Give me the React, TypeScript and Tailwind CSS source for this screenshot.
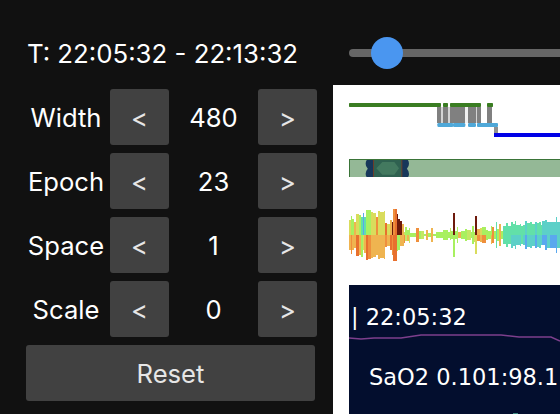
import React from 'react';

const stepperRows = [
  { label: 'Width', value: '480' },
  { label: 'Epoch', value: '23' },
  { label: 'Space', value: '1' },
  { label: 'Scale', value: '0' },
];

const O = '#ef8f3c';
const A = '#efb450';
const Y = '#d9dc5c';
const L = '#a8f060';
const G = '#c4e864';
const T = '#62e0a8';
const C = '#5cd0c8';
const B = '#5aa8ee';
const D = '#6e1a0c';
const R = '#e8702e';

// x (zoomed px), height above, height below, colour above, colour below
const wave: [number, number, number, string, string][] = [
  [48, 15, 15, Y, A], [54, 19, 19, L, O], [57, 16, 15, L, A], [63, 13, 13, A, A], [69, 21, 21, Y, R],
  [78, 20, 20, L, A], [84, 18, 22, T, L], [90, 22, 15, B, Y], [93, 18, 18, T, A], [99, 25, 25, L, R],
  [105, 25, 24, L, O], [114, 23, 23, Y, A], [120, 22, 22, Y, A], [129, 18, 20, O, A], [135, 24, 24, Y, A],
  [141, 23, 23, Y, A], [153, 24, 24, Y, A], [156, 12, 12, R, O], [162, 11, 11, Y, A], [170, 15, 15, A, R],
  [177, 13, 20, D, O], [180, 26, 26, O, R], [186, 26, 26, R, R], [192, 21, 16, D, L], [195, 16, 15, D, L],
  [201, 14, 11, D, A], [207, 11, 11, A, A], [213, 3, 8, G, O], [216, 8, 6, L, G], [222, 5, 6, L, A],
  [228, 7, 8, L, G], [231, 2, 2, L, L], [250, 7, 7, O, O], [258, 4, 4, L, L], [265, 4, 4, G, G],
  [273, 1, 1, L, L], [279, 5, 5, A, A], [285, 2, 2, L, L], [294, 7, 7, A, A], [300, 1, 1, L, L],
  [310, 3, 3, L, L], [330, 5, 5, L, L], [345, 3, 3, L, L], [351, 7, 5, G, L], [354, 4, 4, L, L],
  [360, 22, 22, D, L], [366, 4, 4, L, L], [372, 8, 8, L, L], [375, 3, 3, A, A], [385, 4, 4, L, L],
  [395, 6, 6, L, L], [402, 5, 5, G, G], [414, 3, 3, L, L], [417, 9, 9, L, L], [423, 3, 7, L, Y],
  [426, 19, 19, D, Y], [432, 6, 6, A, O], [440, 7, 7, Y, A], [447, 8, 8, L, O], [459, 5, 5, L, L],
  [465, 4, 4, L, L], [474, 9, 9, L, A], [477, 8, 8, O, O], [483, 4, 4, L, L], [489, 13, 13, T, T],
  [492, 6, 6, L, L], [498, 11, 11, A, A], [504, 4, 4, L, L], [510, 9, 9, T, T], [519, 12, 12, T, T],
  [525, 9, 9, T, T], [534, 13, 13, T, C], [540, 11, 11, T, C], [546, 14, 14, T, C], [549, 10, 10, T, C],
  [561, 11, 11, T, C], [564, 9, 9, T, T], [570, 10, 10, T, C], [576, 14, 14, C, B], [582, 12, 12, T, C],
  [591, 13, 13, T, C], [597, 11, 11, T, C], [606, 13, 13, C, B], [612, 12, 12, T, C], [618, 13, 13, T, C],
  [624, 10, 10, T, C], [627, 14, 10, C, B], [636, 15, 15, C, B], [642, 13, 13, C, C], [651, 13, 13, C, B],
  [669, 18, 18, C, B], [672, 13, 13, C, C],
];

function Hypnogram() {
  return (
    <svg viewBox="0 0 681 330" className="block h-[110px] w-[227px] shrink-0">
      <defs>
        <clipPath id="band">
          <rect x={48} y={225} width={633} height={51} />
        </clipPath>
      </defs>
      <rect x={312} y={66} width={165} height={48} fill="#d4d4d4" />
      <rect x={432} y={66} width={30} height={48} fill="#ffffff" />
      <rect x={396} y={66} width={9} height={48} fill="#f0f0f0" />
      {[[312, 12], [330, 15], [351, 45], [405, 24], [432, 12], [462, 15]].map(([x, w]) => (
        <rect key={x} x={x} y={66} width={w} height={48} fill="#808080" />
      ))}
      <rect x={483} y={126} width={12} height={18} fill="#909090" />
      {[[48, 276], [330, 15], [351, 93], [462, 18]].map(([x, w]) => (
        <rect key={x} x={x} y={54} width={w} height={12} rx={2} fill="#3a7d22" />
      ))}
      <rect x={313} y={114} width={48} height={12} rx={4} fill="#4fa8d8" />
      <rect x={360} y={114} width={37} height={12} rx={4} fill="#4fa8d8" />
      <rect x={405} y={114} width={24} height={12} rx={4} fill="#4fa8d8" />
      <rect x={432} y={114} width={63} height={12} rx={3} fill="#4fa8d8" />
      <rect x={483} y={144} width={198} height={12} fill="#0000e6" />

      <rect x={48} y={222} width={633} height={54} fill="#94b896" />
      <rect x={48} y={222} width={633} height={3} fill="#3a7438" />
      <rect x={48} y={222} width={3} height={54} fill="#3a7438" />
      <g clipPath="url(#band)">
        {[[118, 236], [208, 236], [118, 266], [208, 266]].map(([cx, cy]) => (
          <circle key={`${cx}-${cy}`} cx={cx} cy={cy} r={20} fill="#17375a" />
        ))}
      </g>
      <rect x={120} y={225} width={87} height={51} fill="#2f6150" />
      <polygon points="130,250 148,231 184,231 198,250 184,269 148,269" fill="#43795f" />
      <rect x={120} y={225} width={3} height={51} fill="#6b3c2a" />
      <rect x={205} y={225} width={3} height={51} fill="#6b3c2a" />
    </svg>
  );
}

function Waveform() {
  return (
    <svg viewBox="0 0 681 270" className="block h-[90px] w-[227px] shrink-0" shapeRendering="crispEdges">
      {wave.map(([x, up, down, top, bottom], i) => {
        const next = i + 1 < wave.length ? wave[i + 1][0] : 681;
        return (
          <g key={x}>
            <rect x={x} y={120 - up * 3} width={next - x} height={up * 3} fill={top} />
            <rect x={x} y={120} width={next - x} height={down * 3} fill={bottom} />
          </g>
        );
      })}
    </svg>
  );
}

function SignalPanel() {
  return (
    <div className="relative ml-4 flex-1 overflow-hidden bg-[#030e2e] pl-[2px] pt-[16px] font-['DejaVu_Sans',sans-serif] text-[22.5px] leading-[32px] text-white">
      <div className="whitespace-nowrap">| 22:05:32</div>
      <svg viewBox="0 0 211 20" className="absolute left-0 top-[42px] h-5 w-[211px]">
        <polyline
          points="0,11 12,12 25,11 52,11 72,8 100,8 120,8 152,8 170,10 202,10 211,14"
          fill="none"
          stroke="#7d3f8c"
          strokeWidth="1.5"
        />
      </svg>
      <div className="mt-7 whitespace-nowrap pl-[18px]">SaO2 0.101:98.1</div>
      <div className="absolute bottom-0 left-[164px] h-px w-[5px] bg-[#3d8a80]" />
    </div>
  );
}

export default function App() {
  return (
    <div className="flex h-[414px] w-[560px] overflow-hidden bg-[#111111] font-['Inter',sans-serif] text-white">
      <div className="flex w-[333px] shrink-0 flex-col">
        <div className="flex h-[89px] items-center pl-[27px] pt-[20px] text-[25.8px] whitespace-nowrap">
          T: 22:05:32 - 22:13:32
        </div>
        <div className="flex flex-col gap-2 pl-[22px]">
          {stepperRows.map((row) => (
            <div key={row.label} className="flex h-14 items-center">
              <div className="w-[88px] pt-[2px] text-center text-[25.6px]">{row.label}</div>
              <button className="flex h-14 w-[59px] items-center justify-center rounded-[3px] bg-[#414141] pt-[2px] text-[25.6px] text-[#e6e6e6]">
                &lt;
              </button>
              <div className="w-[89px] pt-[2px] text-center text-[25.6px]">{row.value}</div>
              <button className="flex h-14 w-[59px] items-center justify-center rounded-[3px] bg-[#414141] pt-[2px] text-[25.6px] text-[#e6e6e6]">
                &gt;
              </button>
            </div>
          ))}
          <button className="ml-1 h-14 w-[289px] rounded-[3px] bg-[#414141] pt-[2px] text-[25.6px] text-[#e6e6e6]">Reset</button>
        </div>
      </div>
      <div className="flex min-w-0 flex-1 flex-col">
        <div className="relative flex h-[85px] shrink-0 items-center pl-4 pt-[21px]">
          <div className="h-2 w-[300px] shrink-0 rounded-l-full bg-[#666666]" />
          <div className="absolute left-[38px] top-[37px] h-8 w-8 rounded-full bg-[#4a96f0]" />
        </div>
        <div className="flex min-h-0 flex-1 flex-col bg-white">
          <Hypnogram />
          <Waveform />
          <SignalPanel />
        </div>
      </div>
    </div>
  );
}
